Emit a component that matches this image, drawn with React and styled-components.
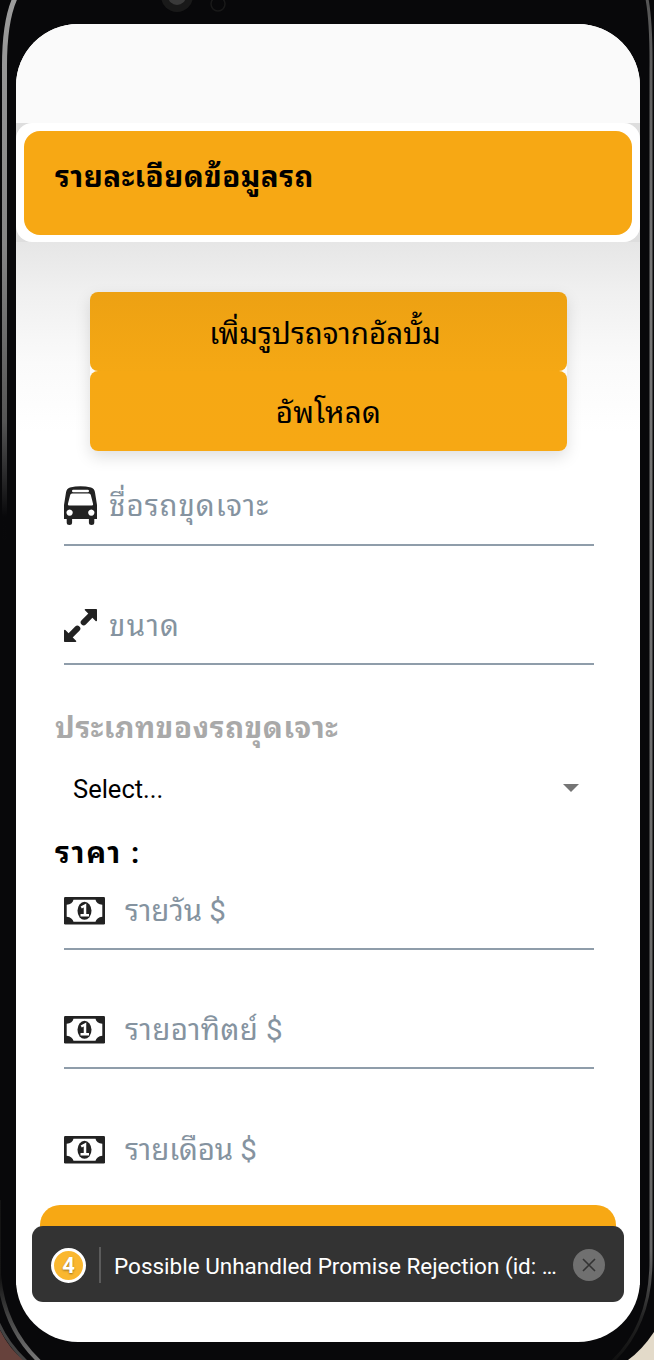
import React from 'react';
import styled, { createGlobalStyle } from 'styled-components';

const ORANGE = '#f7a814';

const Global = createGlobalStyle`
  * { box-sizing: border-box; }
  html, body { margin: 0; padding: 0; }
  body {
    width: 654px;
    height: 1360px;
    overflow: hidden;
    background: linear-gradient(90deg, #67423c 0 50%, #e3dac9 50%);
    font-family: Roboto, "Noto Sans Thai Looped", "Noto Looped Thai", Loma, Waree, Garuda, Umpush, "Droid Sans Thai", Laksaman, "Noto Sans Thai", sans-serif;
  }
`;

const Device = styled.main`
  position: relative;
  width: 654px;
  height: 1360px;
  padding: 24px 14px 18px 16px;
  overflow: hidden;
`;

const Casing = styled.svg`
  position: absolute;
  inset: 0;
  z-index: -1;
`;

const Screen = styled.div`
  position: relative;
  display: flex;
  flex-direction: column;
  width: 624px;
  height: 1318px;
  border-radius: 62px;
  overflow: hidden;
  background: #fff;
`;

const StatusArea = styled.div`
  flex: none;
  height: 99px;
  background: #fafafa;
`;

const HeaderBand = styled.header`
  flex: none;
  height: 119px;
  background: #dedede;
`;

const HeaderFrame = styled.div`
  height: 119px;
  padding: 8px 8px 7px;
  border-radius: 16px;
  background: #fff;
`;

const HeaderCard = styled.div`
  height: 104px;
  padding: 25px 31px;
  border-radius: 16px;
  background: ${ORANGE};
`;

const Heading = styled.h1`
  margin: 0;
  height: 42px;
  line-height: 42px;
  font-size: 29.5px;
  font-weight: 700;
  letter-spacing: 0.5px;
  color: #000;
  white-space: nowrap;
`;

const Form = styled.section`
  flex: none;
  display: flex;
  flex-direction: column;
  padding-top: 50px;
  background: linear-gradient(#e6e6e6 0, #f0f0f0 50px, #fafafa 120px, #fff 190px);
`;

const Actions = styled.div`
  display: flex;
  flex-direction: column;
  width: 477px;
  margin-left: 74px;
  border-radius: 8px;
  box-shadow: 0 6px 16px rgba(0, 0, 0, 0.13);
`;

const ActionButton = styled.button`
  height: 79.25px;
  border: 0;
  padding: 0 ${(p) => (p.$shaded ? 7 : 0)}px 2px 0;
  border-radius: 8px;
  background: ${(p) => (p.$shaded ? 'linear-gradient(#eda113, #f5a814)' : `linear-gradient(#f6a814, ${ORANGE})`)};
  font-family: inherit;
  font-size: 29.5px;
  letter-spacing: ${(p) => (p.$shaded ? 0 : 0.3)}px;
  color: #000;
`;

const Field = styled.label`
  display: flex;
  align-items: center;
  gap: ${(p) => p.$gap || 12}px;
  height: ${(p) => p.$h}px;
  margin: ${(p) => p.$top}px 46px 0 48px;
  padding-top: ${(p) => p.$drop}px;
  border-bottom: 2px solid ${(p) => (p.$bare ? 'transparent' : '#8f9daa')};
`;

const Hint = styled.span`
  font-size: 29.5px;
  line-height: 40px;
  letter-spacing: ${(p) => p.$track}px;
  color: #8593a0;
  white-space: nowrap;
`;

const Caption = styled.h2`
  margin: ${(p) => p.$top}px 0 0 39px;
  height: 40px;
  line-height: 40px;
  font-size: 29.5px;
  font-weight: 700;
  letter-spacing: ${(p) => p.$track}px;
  color: ${(p) => p.$color};
  white-space: nowrap;
`;

const Picker = styled.div`
  display: flex;
  align-items: center;
  justify-content: space-between;
  height: 60px;
  margin: 11px 61px 0 57px;
  font-size: 25.5px;
`;

const Caret = styled.span`
  margin-bottom: 2px;
  border: 8px solid transparent;
  border-top-color: #757575;
  border-bottom: 0;
`;

const Submit = styled.div`
  height: 80px;
  margin: 16.5px 24px 0;
  border-radius: 20px;
  background: ${ORANGE};
`;

const Toast = styled.aside`
  position: absolute;
  left: 16px;
  top: 1202px;
  display: flex;
  align-items: center;
  width: 592px;
  height: 76px;
  padding: 2px 19px 0;
  border-radius: 11px;
  background: #333;
  color: #fff;
`;

const Count = styled.span`
  display: flex;
  align-items: center;
  justify-content: center;
  width: 35px;
  height: 35px;
  border: 3.5px solid #fff;
  border-radius: 50%;
  background: #fab72f;
  font-size: 22px;
  font-weight: 700;
  text-shadow: 0 1px 2px rgba(0, 0, 0, 0.4);
`;

const Divider = styled.span`
  width: 2px;
  height: 36px;
  margin: 0 13px 0 13px;
  background: #5b5b5b;
`;

const Message = styled.span`
  flex: 1;
  padding-top: 2px;
  font-size: 22.5px;
  white-space: nowrap;
`;

const Dismiss = styled.button`
  display: grid;
  place-items: center;
  width: 32px;
  height: 32px;
  padding: 0;
  border: 0;
  border-radius: 50%;
  background: #707070;
`;

const BusIcon = () => (
  <svg width="33" height="39" viewBox="0 0 33 39" fill="#222">
    <path fillRule="evenodd" d="M2 6.500Q2.500 2.500 6 1.500Q16.500 -1 27 1.500Q30.500 2.500 31 6.500L33 19V33H30.300V36.500A2.700 2.500 0 0 1 24.900 36.500V33H8.100V36.500A2.700 2.500 0 0 1 2.700 36.500V33H0V19ZM9.300 3.700A1.300 1.300 0 0 0 9.300 6.300H23.700A1.300 1.300 0 0 0 23.700 3.700ZM8 7.500Q6.500 7.500 6.200 9L3.900 18Q3.700 19.500 5.200 19.500H27.800Q29.300 19.500 29.100 18L26.800 9Q26.500 7.500 25 7.500ZM5.600 23.500a3.100 3.100 0 1 0 .01 0ZM27.300 23.500a3.100 3.100 0 1 0 .01 0Z" />
  </svg>
);

const ResizeIcon = () => (
  <svg width="33" height="33" viewBox="0 0 33 33">
    <g fill="#222" stroke="#222" strokeLinejoin="round" strokeWidth="1.600">
      <path d="M21.500 .8H32.200V11.500Z" />
      <path d="M.8 21.500V32.200H11.500Z" />
    </g>
    <path d="M28 5L19.700 13.300M5 28L13.300 19.700" stroke="#222" strokeWidth="6" strokeLinecap="round" />
  </svg>
);

const CashIcon = () => (
  <svg width="41" height="28" viewBox="0 0 41 28">
    <rect width="41" height="27.500" rx="1.200" fill="#222" />
    <path d="M9.500 2.700H31.500Q32.500 7 38.300 7.800V19.700Q32.500 20.500 31.500 24.800H9.500Q8.500 20.500 2.700 19.700V7.800Q8.500 7 9.500 2.700Z" fill="#fff" />
    <ellipse cx="20.500" cy="13.800" rx="7" ry="9" fill="#222" />
    <path d="M17.200 10.500L21 8.500V18M16.500 18.300H25" fill="none" stroke="#fff" strokeWidth="2.500" />
  </svg>
);

const PhoneBody = () => (
  <Casing width="654" height="1360" viewBox="0 0 654 1360">
    <defs>
      <linearGradient id="rail" gradientUnits="userSpaceOnUse" x1="0" y1="0" x2="0" y2="1360">
        <stop offset="0" stopColor="#9c9c9c" />
        <stop offset=".18" stopColor="#858585" />
        <stop offset=".31" stopColor="#555" />
        <stop offset=".38" stopColor="#08080a" />
        <stop offset=".94" stopColor="#151515" />
        <stop offset="1" stopColor="#777" />
      </linearGradient>
      <linearGradient id="edge" gradientUnits="userSpaceOnUse" x1="0" y1="0" x2="0" y2="1360">
        <stop offset="0" stopColor="#555" />
        <stop offset=".2" stopColor="#777" />
        <stop offset=".92" stopColor="#666" />
        <stop offset=".97" stopColor="#222" />
        <stop offset="1" stopColor="#111" />
      </linearGradient>
    </defs>
    <path d="M0 0H654V1332Q642 1350 628 1360H24Q10 1350 0 1330Z" fill="#08080a" />
    <path d="M17 -6Q4 18 4.500 70V540" fill="none" stroke="url(#rail)" strokeWidth="5" />
    <path d="M-1 1200V1275Q4 1330 42 1364" fill="none" stroke="url(#rail)" strokeWidth="4" />
    <path d="M-2 1322Q8 1345 28 1363" fill="none" stroke="#444" strokeWidth="3" />
    <path d="M646 -6Q651.500 18 651 70V1260Q651 1325 612 1362" fill="none" stroke="url(#edge)" strokeWidth="3" />
    <circle cx="177" cy="-4" r="16" fill="#191919" />
    <circle cx="177" cy="-4" r="9" fill="#3a3a3a" />
    <circle cx="218" cy="4" r="7" fill="none" stroke="#191919" strokeWidth="1.500" />
  </Casing>
);

export default function App() {
  return (
    <Device>
      <Global />
      <PhoneBody />
      <Screen>
        <StatusArea />
        <HeaderBand>
          <HeaderFrame>
            <HeaderCard>
              <Heading>รายละเอียดข้อมูลรถ</Heading>
            </HeaderCard>
          </HeaderFrame>
        </HeaderBand>
        <Form>
          <Actions>
            <ActionButton $shaded>เพิ่มรูปรถจากอัลบั้ม</ActionButton>
            <ActionButton>อัพโหลด</ActionButton>
          </Actions>
          <Field $top={15.5} $h={80} $drop={1} $gap={12}><BusIcon /><Hint $track={1}>ชื่อรถขุดเจาะ</Hint></Field>
          <Field $top={39} $h={80} $drop={3} $gap={12}><ResizeIcon /><Hint $track={1.3}>ขนาด</Hint></Field>
          <Caption $top={43} $track={0.65} $color="#a9a9a9">ประเภทของรถขุดเจาะ</Caption>
          <Picker>Select...<Caret /></Picker>
          <Caption $top={14} $track={1.7} $color="#000">ราคา :</Caption>
          <Field $top={-3} $h={80} $gap={20} $drop={4}><CashIcon /><Hint $track={0}>รายวัน $</Hint></Field>
          <Field $top={39} $h={80} $gap={20} $drop={4}><CashIcon /><Hint $track={0.4}>รายอาทิตย์ $</Hint></Field>
          <Field $top={39} $h={80} $gap={20} $drop={5} $bare><CashIcon /><Hint $track={-0.1}>รายเดือน $</Hint></Field>
          <Submit />
        </Form>
        <Toast>
          <Count>4</Count>
          <Divider />
          <Message>Possible Unhandled Promise Rejection (id: …</Message>
          <Dismiss aria-label="Dismiss">
            <svg width="14" height="14" viewBox="0 0 14 14"><path d="M1 1L13 13M13 1L1 13" stroke="#333" strokeWidth="1.600" /></svg>
          </Dismiss>
        </Toast>
      </Screen>
    </Device>
  );
}
